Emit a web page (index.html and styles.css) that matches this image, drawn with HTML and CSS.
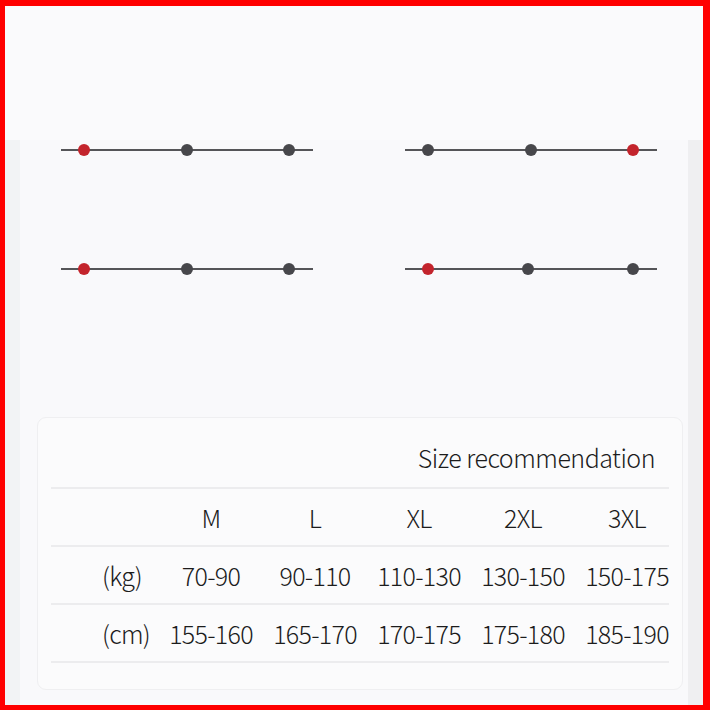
FILE: index.html
```html
<!DOCTYPE html>
<html lang="en">
  <head>
    <meta charset="UTF-8" />
    <meta name="viewport" content="width=device-width, initial-scale=1.0" />
    <title>Size recommendation</title>
    <link rel="stylesheet" href="styles.css">
  </head>
  <body>
    <div class="frame">
      <div class="hero"></div>
      <div class="stage">
        <div class="sliders">
          <div class="slider">
            <span class="dot dot--active"></span>
            <span class="dot"></span>
            <span class="dot"></span>
          </div>
          <div class="slider">
            <span class="dot"></span>
            <span class="dot"></span>
            <span class="dot dot--active"></span>
          </div>
          <div class="slider">
            <span class="dot dot--active"></span>
            <span class="dot"></span>
            <span class="dot"></span>
          </div>
          <div class="slider slider--shift">
            <span class="dot dot--active"></span>
            <span class="dot"></span>
            <span class="dot"></span>
          </div>
        </div>

        <div class="size_card">
          <h3 class="size_card__title">Size recommendation</h3>
          <div class="size_table">
            <div class="size_table__row">
              <span class="size_table__label"></span>
              <span>M</span>
              <span>L</span>
              <span>XL</span>
              <span>2XL</span>
              <span>3XL</span>
            </div>
            <div class="size_table__row">
              <span class="size_table__label">(kg)</span>
              <span>70-90</span>
              <span>90-110</span>
              <span>110-130</span>
              <span>130-150</span>
              <span>150-175</span>
            </div>
            <div class="size_table__row">
              <span class="size_table__label">(cm)</span>
              <span>155-160</span>
              <span>165-170</span>
              <span>170-175</span>
              <span>175-180</span>
              <span>185-190</span>
            </div>
          </div>
        </div>
      </div>
    </div>
  </body>
</html>
```

FILE: styles.css
```css
* {
  box-sizing: border-box;
}
body {
  margin: 0;
  font-family: "Noto Sans CJK SC", "Noto Sans", sans-serif;
  font-weight: 300;
  color: #1c1c1c;
}
.frame {
  width: 710px;
  height: 710px;
  border-style: solid;
  border-color: #ff0000;
  border-width: 6px 7px 5px 5px;
  background: #fafafc;
  display: flex;
  flex-direction: column;
}
.hero {
  height: 134px;
  flex: none;
}
/* faint grey strips down the sides */
.stage {
  flex: 1;
  background: #f9f9fb;
  border-left: 15px solid #f2f3f5;
  border-right: 15px solid #efeff1;
  padding-top: 4px;
}
.sliders {
  display: grid;
  grid-template-columns: 252px 252px;
  column-gap: 92px;
  row-gap: 107px;
  margin-left: 41px;
}
.slider {
  height: 12px;
  display: flex;
  align-items: center;
  justify-content: space-between;
  padding: 0 18px 0 17px;
  background: linear-gradient(#555558, #555558) center / 100% 2px no-repeat;
}
.slider--shift .dot:nth-child(2) {
  margin-left: -6px;
}
.dot {
  width: 12px;
  height: 12px;
  border-radius: 50%;
  background: #47474b;
}
.dot--active {
  background: #c3242c;
}
/* size card */
.size_card {
  width: 646px;
  height: 273px;
  margin: 142px 0 0 17px;
  background: #fbfbfc;
  border: 1px solid #efeff1;
  border-radius: 9px;
  padding: 23px 13px 0 13px;
}
.size_card__title {
  margin: 0;
  font-size: 25px;
  font-weight: 300;
  letter-spacing: -0.5px;
  line-height: 32px;
  text-align: right;
  padding-right: 14px;
  padding-bottom: 14px;
  border-bottom: 2px solid #ececee;
}
.size_table__row {
  display: grid;
  grid-template-columns: 108px repeat(5, 104px);
  align-items: center;
  height: 58px;
  border-bottom: 2px solid #ececee;
  font-size: 25px;
  letter-spacing: -0.7px;
  text-align: center;
}
.size_table__label {
  text-align: left;
  padding-left: 51px;
}
```
